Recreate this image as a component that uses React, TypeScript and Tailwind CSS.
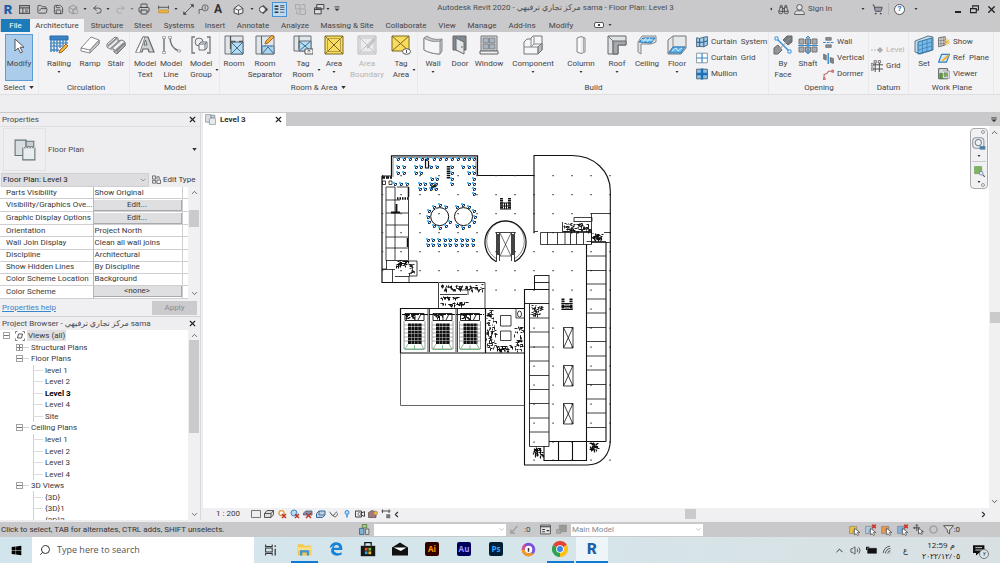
import React from "react";
import { FolderOpen, Save, Printer, Undo2, Redo2, ShoppingCart, ChevronDown, ChevronUp, ChevronLeft, ChevronRight, X, Search, Binoculars, Wifi, Volume2 } from "lucide-react";
import { FaWindows } from "react-icons/fa";

type Kids = { children?: React.ReactNode };

function Ico({ children, size = "size-5" }: Kids & { size?: string }) {
  return (
    <svg viewBox="0 0 20 20" className={`${size} shrink-0`} fill="none" stroke="#6b7178" strokeWidth="1" aria-hidden="true">
      {children}
    </svg>
  );
}

function Caret({ className = "" }: { className?: string }) {
  return (
    <svg viewBox="0 0 6 4" className={`h-[2px] w-[4px] shrink-0 ${className}`} aria-hidden="true">
      <path d="M0 0h6L3 4z" fill="#333" />
    </svg>
  );
}

/* ---------- ribbon icons ---------- */

const icons = {
  modify: <Ico><path d="M6 3v12l3-3 2.500 5 2-1-2.400-4.700H15z" fill="#fff" stroke="#555" /></Ico>,
  railing: (
    <Ico>
      <path d="M1 1h18v4H1z" fill="#3b82c4" stroke="#2a6aa8" />
      <path d="M1 8h18M1 11h14" stroke="#2a6aa8" />
      <path d="M2 5v12M5 5v12M8 5v12M11 5v8M14 5v5M17 5v4M1 15h9" stroke="#4a8ac4" strokeWidth="1.500" />
      <path d="M10 18l1-3 6-6 2 2-6 6z" fill="#f2b33c" stroke="#a06a1c" />
    </Ico>
  ),
  ramp: <Ico><path d="M1 13L11 2l8 3v4l-9 9-9-2z" fill="#fff" stroke="#888" /><path d="M1 13l9 2 9-10" stroke="#888" /><path d="M10 15l9-10v4l-9 9z" fill="#c3c7cb" stroke="#888" /></Ico>,
  stair: <Ico><path d="M1 9l8-7 3 1v3l4-1 3 2v4l-8 8-3-2v-3l-4 0-3-2z" fill="#eef0f1" stroke="#777" /><path d="M2 11l9-8M5 13.500l9-8M8 17l10-9" stroke="#8d9297" strokeWidth="1.800" /><path d="M11 18.500l8-7.500V8l-8 7.500z" fill="#aab0b5" stroke="#777" /></Ico>,
  mtext: <Ico><path d="M1 17L8 2h5l6 15h-5l-1-3H8l-1 3z" fill="#cfd3d6" stroke="#666" strokeWidth="1.200" /><path d="M9 10l1.500-5 1.500 5z" fill="#fff" stroke="#666" /><path d="M1 17L8 2h2L5 17" fill="#fff" stroke="#888" /></Ico>,
  mline: <Ico><path d="M3 2v15" strokeWidth="1.400" /><path d="M9 2c0 7 3 12 9 14" strokeWidth="1.400" /><path d="M1.500 1.500h3v2h-3zM1.500 16.500h3v2h-3zM7.500 1.500h3v2h-3zM16.500 15h3v2h-3z" fill="#fff" stroke="#888" strokeWidth=".7" /></Ico>,
  mgroup: <Ico><path d="M4 2H1v16h3M16 2h3v16h-3" stroke="#777" strokeWidth="1.300" /><circle cx="8" cy="7" r="4" fill="#e9ebed" /><path d="M8 9l2-2h6v6l-2 2H8z" fill="#f5f6f7" /><path d="M8 9h6v6M14 9l2-2" /></Ico>,
  room: <Ico><path d="M1 1h18v18H1z" fill="#e1e6ea" /><path d="M7 7h12v12H7z" fill="#b5dcf0" stroke="#4a6a80" /><path d="M7 7l12 12M19 7L7 19" stroke="#3d6d8e" /><path d="M6.500 1v13M6.500 6.500h5M15 6.500h4" stroke="#555" strokeWidth="1.300" /></Ico>,
  roomsep: <Ico><path d="M1 1h18v18H1z" fill="#e1e6ea" /><path d="M7 11h12v8H7z" fill="#a9d6f0" /><path d="M7 19l6-7 6 7M6.500 1v18" stroke="#3d6d8e" /><path d="M6 11h13" stroke="#3e93cf" strokeDasharray="2 1" /><path d="M10 9l1-3 6-6 2 2-6 6z" fill="#f2b33c" stroke="#a06a1c" /></Ico>,
  tagroom: <Ico><path d="M1 1h17v15H1z" fill="#e1e6ea" /><path d="M6 6h12v10H6z" fill="#b5dcf0" /><path d="M6 6l12 10M18 6L6 16" stroke="#3d6d8e" /><path d="M6 1v13" stroke="#555" /><path d="M12 14h8v5h-8z" fill="#fff" stroke="#555" /><path d="M15 17.500v-2h2v2" stroke="#555" strokeWidth=".7" /></Ico>,
  area: <Ico><path d="M1 1h18v18H1z" fill="#f9dc5c" stroke="#7a6a25" /><path d="M1 1l18 18M19 1L1 19" stroke="#766632" /><path d="M3.500 3.500h13v13h-13z" stroke="#b5a04a" /></Ico>,
  areab: <Ico><path d="M1 1h18v18H1z" fill="#ebebec" stroke="#bbb" /><path d="M1 1l18 18M19 1L1 19M3 3h14v14H3z" stroke="#c4c4c6" /><path d="M10 13l8-9" stroke="#c0c0c2" strokeWidth="2" /></Ico>,
  tagarea: <Ico><path d="M1 1h17v15H1z" fill="#f9dc5c" stroke="#7a6a25" /><path d="M1 1l17 15M18 1L1 16" stroke="#766632" /><ellipse cx="15.500" cy="16.500" rx="4" ry="2.800" fill="#fff" stroke="#555" /><path d="M15.500 15v3" stroke="#555" /></Ico>,
  wall: <Ico><path d="M1 3l3-2c4 3 8 4 15 3v12l-2 3c-7 0-12-2-16-4z" fill="#c5cacf" stroke="#888" /><path d="M1 3c5 3 9 4 16 3v13c-7 0-12-2-16-4z" fill="#f4f5f6" stroke="#888" /><path d="M17 6l2-2" stroke="#888" /></Ico>,
  door: <Ico><path d="M3 1h13v14H3z" fill="#7f8994" stroke="#666" /><path d="M6 3l8 4v12l-8-4z" fill="#e3e7ea" stroke="#666" /><circle cx="12" cy="12" r=".8" fill="#555" stroke="none" /></Ico>,
  window: <Ico><path d="M2 1h16v15H2z" fill="#d3d7da" stroke="#777" /><path d="M4 3h5.500v5H4zM10.500 3H16v5h-5.500zM4 9h5.500v5H4zM10.500 9H16v5h-5.500z" fill="#a7b3be" stroke="#777" strokeWidth=".7" /><path d="M1 16h18v3H1z" fill="#f0f1f2" stroke="#666" /></Ico>,
  component: <Ico><path d="M1 7l3-3h4V3l2-2h9v14l-4 4H1z" fill="#f6f7f8" stroke="#777" /><path d="M15 12l4-4v7l-4 4z" fill="#b8bdc2" /><path d="M8 4v8H1M8 12h7v7M8 12l3-3V2M11 9h8" stroke="#888" /></Ico>,
  column: <Ico><path d="M6 3q4-3 8 0v14q-4 3-8 0z" fill="#e9ebed" stroke="#888" /><path d="M8.500 3v14" stroke="#fff" strokeWidth="2" /><path d="M12.500 3v15" stroke="#aaa" /></Ico>,
  roof: <Ico><path d="M1 1h18v9h-8v9H1z" fill="#dfe2e4" stroke="#666" /><path d="M6 6h13v4h-8v9H6z" fill="#a2a8ae" stroke="#666" /><path d="M1 1l5 5M6 6v13" stroke="#777" /></Ico>,
  ceiling: <Ico><path d="M1 7l4-6h14v6l-5 2H4v10l-3-2z" fill="#dce2e7" stroke="#888" /><path d="M2 7l4-4h12l-4 5z" fill="#5ab0ea" stroke="#2d7db9" /><path d="M6 7l3-4M10 7l3-4M4 5h12" stroke="#d6edfb" /></Ico>,
  floor: <Ico><path d="M1 5l5-4h13v12l-5 6H1z" fill="#e6e9eb" stroke="#777" /><path d="M6 1v11h13M1 18l5-6" stroke="#888" /><path d="M2 18l4-6h12l-4 6z" fill="#5fb1ea" stroke="#2d7db9" /><path d="M5 16l4-3 2 3 4-3" stroke="#d6edfb" /></Ico>,
  csystem: <Ico size="size-[12px]"><path d="M1 3l5 1 7-2 6-1v14l-6 3-7-1-5 1z" fill="#a6cdea" stroke="#49677f" strokeWidth="1.600" /><path d="M6 4v14M13 2v16M1 10l5 1 7-1 6-2" stroke="#33678f" strokeWidth="1.800" /></Ico>,
  cgrid: <Ico size="size-[12px]"><path d="M1 2h18v16H1z" fill="#fff" stroke="#7d8e9b" strokeWidth="1.500" /><path d="M10 2v16M1 10h18" stroke="#2f8ad0" strokeWidth="2" /></Ico>,
  mullion: <Ico size="size-[12px]"><path d="M1 2h18v16H1z" fill="#93bfe0" stroke="#44617a" strokeWidth="1.500" /><path d="M10 1v18M1 10h18" stroke="#1d70b5" strokeWidth="4" /></Ico>,
  byface: <Ico><path d="M10 5l4-4h5v6l-4 3z" fill="#777d84" stroke="#666" /><path d="M1 13l4-3 4 5-4 4H1z" fill="#8f959b" stroke="#666" /><path d="M4 4l12 12" stroke="#3c95dc" strokeWidth="1.500" /><path d="M2 2h3v3H2zM15 15h3v3h-3z" fill="#fff" stroke="#3c95dc" /><path d="M17 3L3 18" stroke="#999" /></Ico>,
  shaft: <Ico><path d="M1 4h5v5H1zM14 4h5v5h-5zM1 12h5v5H1zM14 12h5v5h-5zM7.500 4h5v5h-5zM7.500 12h5v5h-5z" fill="#a5abb1" stroke="#777" /><path d="M10 1v18M8 3l2-2 2 2M8 17l2 2 2-2M0 10.500h20" stroke="#318dd6" /></Ico>,
  owall: <Ico size="size-[11px]"><path d="M5 1h10v5H5zM5 14h10v5H5z" fill="#888f96" stroke="#555" /><path d="M0 10h20" stroke="#2d89d3" strokeWidth="2" strokeDasharray="5 2" /></Ico>,
  overt: <Ico size="size-[11px]"><path d="M1 2l5 2v9l-5-2zM13 8l6 2v9l-6-2z" fill="#7d848b" stroke="#555" /><path d="M9.500 0v20" stroke="#2d89d3" strokeWidth="2.500" /></Ico>,
  odorm: <Ico size="size-[11px]"><path d="M2 18V10q6-1 8-6h8" stroke="#b96e6c" strokeWidth="2" /><path d="M0 16h4v4H0zM16 2h4v4h-4z" fill="#d99" stroke="#b44" /></Ico>,
  level: <Ico size="size-[12px]"><path d="M0 10h12" stroke="#aaa" strokeDasharray="3 2" strokeWidth="1.500" /><path d="M15 5l5 5-5 5-5-5z" fill="#aaa" stroke="none" /></Ico>,
  grid: <Ico size="size-[12px]"><path d="M7 4v16M14 4v16M4 8h16M4 15h16" stroke="#444" strokeWidth="1.500" /><path d="M5 1h4v4H5zM12 1h4v4h-4zM0 6h4v4H0zM0 13h4v4H0z" fill="#ddd" stroke="#444" /></Ico>,
  set: <Ico><path d="M1 6l13-5 5 1v13l-13 4-5-2z" fill="#c7d9e6" stroke="#5e7b91" /><path d="M4 7l14-4v12l-14 4z" fill="#79bae6" stroke="#2e74a8" /><path d="M8.500 5.500v12M13 4.500v12M4 11l14-4M4 15l14-4" stroke="#3b83b8" strokeWidth=".8" /></Ico>,
  show: <Ico size="size-[12px]"><path d="M1 3l11-2v14L1 18z" fill="#ddd" stroke="#666" strokeWidth="1.500" /><path d="M5 2v15M9 2v14M1 8l11-1M1 13l11-1" stroke="#666" /><path d="M15 4v12M9 10h11M11 6l8 8M19 6l-8 8" stroke="#f0b73e" strokeWidth="1.500" /></Ico>,
  ref: <Ico size="size-[12px]"><path d="M1 17L6 4h13l-5 13z" fill="#d7eaf7" stroke="#2d7fc0" strokeWidth="2" /><path d="M7 15L18 5" stroke="#efaf37" strokeWidth="3" /></Ico>,
  viewer: <Ico size="size-[12px]"><path d="M1 1h15v17H1z" fill="#d7dde0" stroke="#555" strokeWidth="1.500" /><path d="M3 9h8v8H3z" fill="#5a9c3e" stroke="#376b24" /><path d="M8 5h11v12H8" stroke="#777" fill="#eee" /><path d="M10 8h6v6h-6z" fill="#7ab55c" /></Ico>,
};

/* ---------- ribbon ---------- */

type ToolProps = { w: string; icon: React.ReactNode; l1: string; l2?: string; below?: boolean; side?: boolean; dim?: boolean };

function Tool({ w, icon, l1, l2, below, side, dim }: ToolProps) {
  return (
    <button type="button" className={`flex shrink-0 flex-col items-center pt-[3px] leading-[11px] ${w} ${dim ? "text-[#b5b5b7]" : ""}`}>
      {icon}
      <span className="mt-[3px] whitespace-nowrap">{l1}</span>
      {below && <Caret className="mt-[2px]" />}
      {l2 && (
        <span className="relative whitespace-nowrap">
          {l2}
          {side && <Caret className="absolute -right-[7px] top-0" />}
        </span>
      )}
    </button>
  );
}

function Small({ icon, label, dim }: { icon: React.ReactNode; label: string; dim?: boolean }) {
  return (
    <button type="button" className={`flex h-4 items-center gap-[3px] whitespace-pre ${dim ? "text-[#b5b5b7]" : ""}`}>
      {icon}
      {label}
    </button>
  );
}

function Group({ label, w, caret, children }: Kids & { label: string; w: string; caret?: boolean }) {
  return (
    <section className={`flex shrink-0 flex-col border-r border-[#e9e8ea] ${w}`}>
      <div className="flex flex-1">{children}</div>
      <div className="flex h-[13px] items-center justify-center gap-1">
        {label}
        {caret && <Caret className="!h-[3px] !w-[5px]" />}
      </div>
    </section>
  );
}

function Ribbon() {
  return (
    <div className="flex h-[63px] shrink-0 overflow-hidden border-b border-[#dedddf] bg-[#f3f2f4] text-[#454548]">
      <Group label="Select" w="w-[39px]" caret>
        <button type="button" className="ml-[5px] mt-[2px] flex h-[47px] w-[28px] flex-col items-center border border-[#5d9bd3] bg-[#abcdeb] pt-px leading-[11px]">
          {icons.modify}
          <span className="mt-[2px]">Modify</span>
        </button>
      </Group>
      <Group label="Circulation" w="w-[91px] pl-1">
        <Tool w="w-[32px]" icon={icons.railing} l1="Railing" below />
        <Tool w="w-[30px]" icon={icons.ramp} l1="Ramp" />
        <Tool w="w-[22px]" icon={icons.stair} l1="Stair" />
      </Group>
      <Group label="Model" w="w-[90px] pl-px">
        <Tool w="w-[28px]" icon={icons.mtext} l1="Model" l2="Text" />
        <Tool w="w-[24px]" icon={icons.mline} l1="Model" l2="Line" />
        <Tool w="w-[36px]" icon={icons.mgroup} l1="Model" l2="Group" side />
      </Group>
      <Group label="Room & Area" w="w-[198px]" caret>
        <Tool w="w-[28px]" icon={icons.room} l1="Room" />
        <Tool w="w-[34px]" icon={icons.roomsep} l1="Room" l2="Separator" />
        <Tool w="w-[42px]" icon={icons.tagroom} l1="Tag" l2="Room" side />
        <Tool w="w-[20px]" icon={icons.area} l1="Area" below />
        <Tool w="w-[46px]" icon={icons.areab} l1="Area" l2="Boundary" dim />
        <Tool w="w-[22px]" icon={icons.tagarea} l1="Tag" l2="Area" side />
      </Group>
      <Group label="Build" w="w-[351px] pl-px">
        <Tool w="w-[28px]" icon={icons.wall} l1="Wall" below />
        <Tool w="w-[26px]" icon={icons.door} l1="Door" />
        <Tool w="w-[32px]" icon={icons.window} l1="Window" />
        <Tool w="w-[56px]" icon={icons.component} l1="Component" below />
        <Tool w="w-[40px]" icon={icons.column} l1="Column" below />
        <Tool w="w-[32px]" icon={icons.roof} l1="Roof" below />
        <Tool w="w-[28px]" icon={icons.ceiling} l1="Ceiling" />
        <Tool w="w-[32px]" icon={icons.floor} l1="Floor" below />
        <div className="flex flex-col pl-[3px] pt-[2px]">
          <Small icon={icons.csystem} label="Curtain  System" />
          <Small icon={icons.cgrid} label="Curtain  Grid" />
          <Small icon={icons.mullion} label="Mullion" />
        </div>
      </Group>
      <Group label="Opening" w="w-[100px] pl-px">
        <Tool w="w-[26px]" icon={icons.byface} l1="By" l2="Face" />
        <Tool w="w-[24px]" icon={icons.shaft} l1="Shaft" />
        <div className="flex flex-col pl-[3px] pt-[2px]">
          <Small icon={icons.owall} label="Wall" />
          <Small icon={icons.overt} label="Vertical" />
          <Small icon={icons.odorm} label="Dormer" />
        </div>
      </Group>
      <Group label="Datum" w="w-[40px]">
        <div className="flex flex-col pl-[2px] pt-[10px]">
          <Small icon={icons.level} label="Level" dim />
          <Small icon={icons.grid} label="Grid" />
        </div>
      </Group>
      <Group label="Work Plane" w="w-[85px] pl-[2px]">
        <Tool w="w-[26px]" icon={icons.set} l1="Set" />
        <div className="flex flex-col pl-px pt-[2px]">
          <Small icon={icons.show} label="Show" />
          <Small icon={icons.ref} label="Ref  Plane" />
          <Small icon={icons.viewer} label="Viewer" />
        </div>
      </Group>
    </div>
  );
}

/* ---------- title bar and tabs ---------- */

function Cell({ w, children, label }: Kids & { w: string; label: string }) {
  return (
    <button type="button" aria-label={label} className={`flex h-4 shrink-0 items-center justify-center ${w}`}>
      {children}
    </button>
  );
}

const q = "size-[11px]";

function TitleBar() {
  return (
    <header className="flex h-[18px] shrink-0 items-center bg-[#c9c8ca] text-[#4c4c4f]">
      <div className="flex w-[345px] shrink-0 items-center">
        <Cell w="w-4" label="Revit"><span className="text-[13px] font-black leading-none text-[#1d5fa6]">R</span></Cell>
        <Cell w="w-4" label="Home"><Ico size={q}><path d="M1 3h18v14H1zM1 7h18M7 7v10" stroke="#555" strokeWidth="2" /><path d="M11 11h5M11 14h5" stroke="#555" strokeWidth="2" /></Ico></Cell>
        <Cell w="w-5" label="Open"><FolderOpen className={q} /></Cell>
        <Cell w="w-3" label="Save"><Save className={q} /></Cell>
        <Cell w="w-[18px]" label="Sync"><Ico size={q}><path d="M2 6l7-4 7 4v8l-7 4-7-4zM2 6l7 4 7-4M9 10v8" stroke="#8b8b8e" strokeWidth="1.500" /><circle cx="14" cy="14" r="4" fill="#c9c8ca" stroke="#999" strokeWidth="1.500" /></Ico></Cell>
        <Cell w="w-[6px]" label="Sync options"><Caret /></Cell>
        <Cell w="w-[18px]" label="Undo"><Undo2 className={q} /></Cell>
        <Cell w="w-1" label="Undo list"><Caret /></Cell>
        <Cell w="w-5" label="Redo"><Redo2 className={`${q} text-[#a5a5a8]`} /></Cell>
        <Cell w="w-1" label="Redo list"><Caret className="opacity-50" /></Cell>
        <Cell w="w-5" label="Print"><Printer className="size-[12px]" /></Cell>
        <Cell w="w-[18px]" label="Measure"><Ico size={q}><path d="M1 6h18M1 3v6M19 3v6" stroke="#444" strokeWidth="1.500" /><path d="M1 11h18v5H1z" fill="#f2b63d" stroke="#b57c1a" /></Ico></Cell>
        <Cell w="w-2" label="Measure list"><Caret /></Cell>
        <Cell w="w-4" label="Dimension"><Ico size={q}><path d="M3 17L17 3" stroke="#444" strokeWidth="1.500" /><path d="M1 14l5 5H1zM14 1h5v5z" fill="#444" stroke="#444" /></Ico></Cell>
        <Cell w="w-[14px]" label="Tag"><Ico size={q}><circle cx="13" cy="7" r="5.500" stroke="#555" strokeWidth="1.500" /><path d="M13 4v6M8 10H2v8" stroke="#555" strokeWidth="1.500" /></Ico></Cell>
        <Cell w="w-4" label="Text"><span className="text-[12px] font-bold leading-none text-[#333]">A</span></Cell>
        <Cell w="w-[24px]" label="3D view"><Ico size={q}><path d="M2 8l8-6 8 6v8l-8 3-8-3z" fill="#eee" stroke="#444" strokeWidth="1.800" /><path d="M2 8l8 3 8-3M10 11v8" stroke="#444" strokeWidth="1.500" /></Ico></Cell>
        <Cell w="w-[4px]" label="3D list"><Caret /></Cell>
        <Cell w="w-[18px]" label="Section"><Ico size={q}><path d="M9 2l9 8-9 8z" fill="#444" stroke="#444" /><circle cx="8" cy="10" r="5.500" fill="#eee" stroke="#444" strokeWidth="1.800" /></Ico></Cell>
        <button type="button" aria-label="Thin lines" className="flex h-[15px] w-[15px] shrink-0 items-center justify-center border border-[#4a90d0] bg-[#bddaf3]"><Ico size={q}><path d="M1 4h7M1 9h7M1 15h7" stroke="#333" strokeWidth="3" /><path d="M11 3h8M11 6h8M11 10h8M11 15h8" stroke="#333" strokeWidth="1.300" /></Ico></button>
        <Cell w="w-[26px]" label="Close inactive"><Ico size={q}><path d="M1 1h8v8H1zM9 9h10v10H9zM12 1h6v6M3 12v6h4" stroke="#a0a0a3" strokeWidth="1.500" /></Ico></Cell>
        <Cell w="w-3" label="Switch windows"><Ico size={q}><path d="M5 1h13v8H5zM1 7h12v11H1z" fill="#ddd" stroke="#444" strokeWidth="1.800" /><path d="M1 10h12" stroke="#444" strokeWidth="2" /></Ico></Cell>
        <Cell w="w-[6px]" label="Windows list"><Caret /></Cell>
        <Cell w="w-[12px]" label="Customize"><Ico size="size-[6px]"><path d="M2 3h16" stroke="#333" strokeWidth="3" /><path d="M2 9h16l-8 8z" fill="#333" /></Ico></Cell>
      </div>
      <h1 className="flex-1 whitespace-nowrap pb-[3px] text-center">
        Autodesk Revit 2020 - مركز تجاري ترفيهي sama - Floor Plan: Level 3
      </h1>
      <div className="flex w-[234px] shrink-0 items-center">
        <Cell w="w-[10px]" label="Collapse search"><Caret className="rotate-90" /></Cell>
        <Cell w="w-[14px]" label="Search"><Binoculars className={q} /></Cell>
        <Cell w="w-[18px]" label="Account"><Ico size={q}><circle cx="10" cy="6" r="5" fill="#e5e5e6" stroke="#444" strokeWidth="1.500" /><path d="M1 19c0-6 5-8 9-6 4-2 9 0 9 6z" fill="#e5e5e6" stroke="#444" strokeWidth="1.500" /></Ico></Cell>
        <button type="button" className="w-[52px] text-left">Sign In</button>
        <Cell w="w-[6px]" label="Account list"><Caret /></Cell>
        <Cell w="w-[22px]" label="Store"><ShoppingCart className="size-[11px] fill-[#9aa0b0]" /></Cell>
        <span className="h-3 w-px bg-[#b5b4b6]" />
        <button type="button" className="mx-[5px] flex size-[11px] items-center justify-center rounded-full border border-[#555] bg-white text-[8px] font-bold leading-none text-[#2573b8]">?</button>
        <Cell w="w-[12px]" label="Help list"><Caret /></Cell>
        <div className="ml-auto flex items-center gap-[5px] pr-[3px]">
          <Cell w="w-[10px]" label="Minimize"><span className="mt-[5px] h-[2px] w-[6px] bg-[#222]" /></Cell>
          <Cell w="w-[12px]" label="Restore"><Ico size="size-[9px]"><path d="M6 6V2h13v9h-4M1 8h13v9H1z" stroke="#222" strokeWidth="2.500" /></Ico></Cell>
          <Cell w="w-[12px]" label="Close"><X className="size-[11px] text-[#222]" strokeWidth={3} /></Cell>
        </div>
      </div>
    </header>
  );
}

const tabs: [string, string][] = [
  ["Architecture", "w-[54px] bg-[#f3f2f4]"], ["Structure", "w-[46px]"], ["Steel", "w-[26px]"], ["Systems", "w-[46px]"],
  ["Insert", "w-[26px]"], ["Annotate", "w-[50px]"], ["Analyze", "w-[34px]"], ["Massing & Site", "w-[70px]"],
  ["Collaborate", "w-[48px]"], ["View", "w-[34px]"], ["Manage", "w-[36px]"], ["Add-Ins", "w-[44px]"], ["Modify", "w-[34px]"],
];

function Tabs() {
  return (
    <nav className="flex h-[14px] shrink-0 items-stretch bg-[#c9c8ca] pl-px text-[#454548]">
      <button type="button" className="mt-px w-[29px] bg-[#1c7bb8] text-white">File</button>
      {tabs.map(([t, w]) => (
        <button type="button" key={t} className={`mt-px flex shrink-0 items-center justify-center whitespace-nowrap ${w}`}>{t}</button>
      ))}
      <button type="button" aria-label="Minimize ribbon" className="ml-4 flex items-center gap-1">
        <span className="flex h-[6px] w-[10px] items-center justify-center rounded-[2px] border border-[#555] bg-white"><span className="size-[2px] bg-[#444]" /></span>
        <Caret />
      </button>
    </nav>
  );
}

/* ---------- left palettes ---------- */

const props: [string, string, boolean][] = [
  ["Parts Visibility", "Show Original", false],
  ["Visibility/Graphics Ove...", "Edit...", true],
  ["Graphic Display Options", "Edit...", true],
  ["Orientation", "Project North", false],
  ["Wall Join Display", "Clean all wall joins", false],
  ["Discipline", "Architectural", false],
  ["Show Hidden Lines", "By Discipline", false],
  ["Color Scheme Location", "Background", false],
  ["Color Scheme", "<none>", true],
];

function PlanIcon({ size }: { size: string }) {
  return (
    <Ico size={size}>
      <path d="M1 1h10v14H1z" fill="#d9dfe0" stroke="#65747a" />
      <path d="M11 2h7v5h-7z" stroke="#65747a" fill="#c5cfd1" />
      <path d="M8 8h11v11H8z" fill="#e8eeee" stroke="#65747a" />
      <path d="M8 8h11" stroke="#fff" strokeDasharray="1 1.500" />
    </Ico>
  );
}

function PaletteHead({ children }: Kids) {
  return (
    <div className="flex h-[13px] shrink-0 items-center justify-between pl-[2px] pr-[3px] text-[#4a4a4d]">
      <h2 className="whitespace-nowrap">{children}</h2>
      <button type="button" aria-label="Close"><X className="size-[9px] text-[#222]" strokeWidth={3} /></button>
    </div>
  );
}

function Properties() {
  return (
    <section className="flex shrink-0 flex-col border-b border-[#d3d2d4]">
      <PaletteHead>Properties</PaletteHead>
      <button type="button" className="flex h-[46px] items-center border-t border-[#e0dfe1] pr-[3px] text-left text-[#4a4a4d]">
        <span className="ml-[3px] flex h-[43px] w-[43px] items-center justify-center border border-[#dfe3e6]"><PlanIcon size="size-[22px]" /></span>
        <span className="ml-[2px] flex-1">Floor Plan</span>
        <Caret className="!h-[3px] !w-[5px]" />
      </button>
      <div className="flex h-[15px] items-center">
        <div className="relative ml-px flex h-[14px] w-[148px] items-center border border-[#cfced0] bg-[#dddcde]">
          <select aria-label="Element type" className="h-full w-full appearance-none pl-px text-[#222]"><option>Floor Plan: Level 3</option></select>
          <ChevronDown className="pointer-events-none absolute right-px size-[8px] text-[#777]" />
        </div>
        <button type="button" className="flex flex-1 items-center gap-[2px] whitespace-nowrap pl-[3px]">
          <Ico size="size-[9px]"><path d="M1 2h7v7H1zM1 12h7v6H1zM11 11h8v8h-8zM11 8V4h5v5" stroke="#555" strokeWidth="1.800" /></Ico>
          Edit Type
        </button>
      </div>
      <div className="flex h-[112px] overflow-hidden bg-white">
        <table className="h-[112px] flex-1 table-fixed border-collapse">
          <colgroup><col className="w-[91px]" /><col className="w-[89px]" /><col /></colgroup>
          <tbody>
            {props.map(([k, v, b]) => (
              <tr key={k} className="border-b border-[#cfced0]">
                <td className="overflow-hidden whitespace-nowrap border-r border-[#b9b8ba] p-0 pl-[6px] leading-[10px]">{k}</td>
                <td className="whitespace-nowrap border-r border-[#cfced0] p-0 leading-[10px]">
                  {b ? (
                    <button type="button" className="block h-[11px] w-full border-b border-r border-[#a9a8aa] bg-[#dfdee0] leading-[10px]">{v}</button>
                  ) : (
                    <span className="pl-px">{v}</span>
                  )}
                </td>
                <td className="p-0" />
              </tr>
            ))}
          </tbody>
        </table>
        <Scroll thumb="mt-[13px] h-[17px]" />
      </div>
      <div className="flex h-[17px] items-center justify-between bg-[#f0eff1] pl-[2px] pr-[3px]">
        <a href="#help" className="text-[#3a84c8] underline">Properties help</a>
        <button type="button" className="h-[14px] w-[45px] bg-[#cbcacc] text-[#8c8c8f]">Apply</button>
      </div>
    </section>
  );
}

function Scroll({ thumb }: { thumb: string }) {
  return (
    <div className="flex w-[12px] shrink-0 flex-col items-center bg-[#f0eff1] py-px">
      <ChevronUp className="size-[9px] shrink-0 text-[#444]" />
      <div className={`w-[10px] bg-[#cac9cb] ${thumb}`} />
      <ChevronDown className="mt-auto size-[9px] shrink-0 text-[#444]" />
    </div>
  );
}

type Node = { t: string; d: number; s?: "+" | "-"; b?: boolean };
const tree: Node[] = [
  { t: "Views (all)", d: 0, s: "-" }, { t: "Structural Plans", d: 1, s: "+" }, { t: "Floor Plans", d: 1, s: "-" },
  { t: "level 1", d: 2 }, { t: "Level 2", d: 2 }, { t: "Level 3", d: 2, b: true }, { t: "Level 4", d: 2 }, { t: "Site", d: 2 },
  { t: "Ceiling Plans", d: 1, s: "-" }, { t: "level 1", d: 2 }, { t: "Level 2", d: 2 }, { t: "Level 3", d: 2 }, { t: "Level 4", d: 2 },
  { t: "3D Views", d: 1, s: "-" }, { t: "{3D}", d: 2 }, { t: "{3D}1", d: 2 }, { t: "{3D}2", d: 2 },
];
const indent = ["pl-[3px]", "pl-[16px]", "pl-[33px]"];

function Browser() {
  return (
    <section className="flex min-h-0 flex-1 flex-col">
      <PaletteHead>Project Browser - مركز تجاري ترفيهي sama</PaletteHead>
      <div className="flex min-h-0 flex-1 bg-white">
        <div className="min-w-0 flex-1 overflow-hidden">
          <ul className="grid h-[196px] auto-rows-fr">
            {tree.map((n, i) => (
              <li key={i} className={`flex min-h-0 items-center ${indent[n.d]}`}>
                {n.s && (
                  <span className="flex size-[7px] items-center justify-center border border-[#a3a2a4] bg-white">
                    <svg viewBox="0 0 5 5" className="size-[5px]" aria-hidden="true"><path d={n.s === "+" ? "M0 2.500h5M2.500 0v5" : "M0 2.500h5"} stroke="#777" strokeWidth="1" /></svg>
                  </span>
                )}
                {n.d === 0 && <Ico size="ml-[5px] mr-[2px] size-[10px]"><path d="M1 5V1h4M15 1h4v4M19 15v4h-4M5 19H1v-4" stroke="#555" strokeWidth="1.500" /><path d="M7 6h8l-2 8H5z" stroke="#444" strokeWidth="1.800" /></Ico>}
                {n.d === 1 && <span className="mr-[2px] h-px w-[6px] bg-[#d5d4d6]" />}
                {n.d === 2 && (
                  <span className="mr-[2px] flex h-full w-[10px] items-center border-l border-[#d0cfd1]"><span className="h-px w-full bg-[#dddcde]" /></span>
                )}
                <span className={`whitespace-nowrap leading-[11px] ${n.b ? "font-bold text-black" : ""} ${n.d === 0 ? "bg-[#dfdee0] px-px" : ""}`}>{n.t}</span>
              </li>
            ))}
          </ul>
        </div>
        <Scroll thumb="h-[93px]" />
      </div>
    </section>
  );
}

/* ---------- floor plan ---------- */

function clutter(x: number, y: number, w: number, h: number, n: number, seed: number) {
  let s = seed * 7919;
  const r = () => ((s = (s * 16807) % 2147483647) / 2147483647);
  let d = "";
  for (let i = 0; i < n; i++) {
    const px = Math.round(x + r() * (w - 3)) + 0.5;
    const py = Math.round(y + r() * (h - 3)) + 0.5;
    const k = r();
    const l = 1 + Math.round(r() * 2);
    d += k < 0.42 ? `M${px} ${py}h${l}` : k < 0.84 ? `M${px} ${py}v${l}` : `M${px} ${py}h2v2`;
  }
  return d;
}

const seats: [number, number][] = [];
[70, 88, 106, 122, 140, 157, 178, 195, 213, 231, 250, 268, 282, 297].forEach((x) => seats.push([x, 41]));
[70, 87, 122, 138, 168, 187, 231, 265, 283, 297].forEach((x) => seats.push([x, 65]));
[70, 87, 122, 138, 231, 283, 297].forEach((x) => seats.push([x, 83]));
[185, 231, 297, 170].forEach((x) => seats.push([x, 101]));
[60, 77, 95, 135, 150, 168, 183, 231, 283, 297].forEach((x) => seats.push([x, 118]));
[135, 150, 168, 183, 297].forEach((x) => seats.push([x, 133]));
seats.push([297, 148]);
for (let i = 0; i < 9; i++) seats.push([158 + i * 17, 284], [158 + i * 17, 301]);
const ring = (cx: number, skip: number[]) => {
  for (let i = 0; i < 12; i++) {
    if (skip.includes(i)) continue;
    const a = (i * Math.PI) / 6;
    seats.push([cx + 36 * Math.cos(a), 215 + 34 * Math.sin(a)]);
  }
};
ring(194, [0, 11]);
ring(265, [6, 5, 7]);

const dots: [number, number][] = [];
const gx = [382.5, 401, 420, 439, 458, 477, 496, 515, 534, 553, 572, 591, 610];
const gy = [175.5, 194.5, 213.5, 232.5, 251.5, 270.5, 290, 309, 328, 347, 366, 385, 404, 423, 442, 460];
gy.forEach((y) =>
  gx.forEach((x) => {
    if (y > 280 && x < 496) return;
    if (y > 300 && x < 530) return;
    dots.push([x, y]);
  })
);

const rowsR = [241.5, 256, 270.5, 284, 299, 313, 327.5, 341.5, 356, 370, 384.5, 399, 413, 427.5, 441.5];
const rowsL = [318, 332, 347, 361, 375.5, 389.5, 403.5, 418, 432, 446.5];

function Stairs({ x, y }: { x: number; y: number }) {
  return (
    <g>
      <path d={`M${x + 1.5} ${y}v11M${x + 9.5} ${y}v11`} strokeWidth="3" strokeDasharray="1.500 .6" />
      <path d={`M${x} ${y + 5}h11M${x} ${y + 8}h11M${x} ${y + 11}h11M${x + 4.500} ${y + 5}v6M${x + 6.500} ${y + 5}v6`} strokeWidth="1" />
    </g>
  );
}

function FloorPlan() {
  return (
    <svg viewBox="375 145 245 330" className="h-[330px] w-[245px] shrink-0" fill="none" stroke="#111" strokeWidth=".8" role="img" aria-label="Level 3 floor plan">
      <path d="M382 176V282.500H438M382 176H391.500V155.800H477.500V175.500H534" strokeWidth="1.200" />
      <path d="M393 177V157.500H476V175" strokeWidth=".5" />
      <path d="M382 177.500h10" strokeWidth="2.500" strokeDasharray="3 1" />
      <path d="M382.500 181h3v3.500h-3zM389 181h3v3.500h-3z" />
      <path d="M386 187H395V260.500M386 187V260.500H408.500V187H397M386 200H400M395 213H408.500M386 225H408.500M386 237H408.500M386 248H408.500M386 213h9" />
      <path d="M386.500 260V269H382M392.500 269.500V282M382 269.500H395M395 276.500H409V282M409 261h8v15h-8" />
      <path d={clutter(396, 260, 14, 9, 32, 11)} strokeWidth="1.100" />
      <path d={clutter(408, 261, 7, 16, 20, 19)} />
      <path d="M397 198.500h11" strokeWidth="2.500" strokeDasharray="1.500 1" />
      <path d="M391 212.500h9M396.500 204v8" strokeWidth="1.800" />
      <path d="M408.500 187v10M407.500 238v9" strokeWidth="1.500" />
      <path d="M425.500 159h3v9h-3z" strokeWidth="1.200" />
      <path d="M448.500 166v13" strokeWidth="3.500" strokeDasharray="1.500 .7" />
      <path d={clutter(430, 183, 10, 7, 18, 35)} />
      <circle cx="439.700" cy="216.600" r="9" strokeWidth="1" />
      <circle cx="463.500" cy="216.600" r="9" strokeWidth="1" />
      {seats.map(([x, y], i) => {
        const px = Math.round(375 + x / 3);
        const py = Math.round(145 + y / 3);
        return (
          <g key={i} stroke="none">
            <path d={`M${px - 2} ${py - 2}h2v2h-2z`} fill="#58bdf0" />
            <path d={`M${px - 1} ${py}h1v1h1v-2h1v2h-1v1h-2z`} fill="#1d3f7d" />
            <path d={`M${px} ${py - 1}h1v1h-1z`} fill="#1c2d55" />
            <path d={`M${px + 1} ${py + 1}h1v1h-1z`} fill="#dcc36a" />
          </g>
        );
      })}
      {dots.map(([x, y], i) => <path key={i} d={`M${x - 0.6} ${y - 0.6}h1.300v1.300h-1.300z`} fill="#333" stroke="none" />)}

      <path d="M496 261.500A20.500 21.500 0 1 1 515 261.500" strokeWidth="1.200" />
      <path d="M497 259A18.800 20 0 1 1 514 259" strokeWidth=".5" />
      <path d="M496.500 232.500h18M496.500 232.500V262M514.500 232.500V262M499.500 233V261M511.500 233V261" />
      <path d="M498 234v21M513 234v21" strokeWidth="2.200" stroke="#444" />
      <path d="M500 233l11 23M511 233l-11 23M500 256h11" strokeWidth=".6" />
      <Stairs x={500} y={198} />

      <path d="M534 232.500V155.500H572C594 155.500 610.300 171 610.300 191V440C610.300 455 601 465 587 465H524.500V289.500H549" strokeWidth="1.100" />
      <path d="M591.500 244V213.500H610M534 231.500h4M574 222v-4.500h18v4" />
      <path d={clutter(562, 223, 30, 11, 74, 41)} strokeWidth=".9" />
      <path d="M562.500 222v9M562 231.500h30M574 221.500h17" />
      <path d="M540.500 232.500H591.500V244.500H540.500zM547.500 232.500v12M557.500 232.500v12M565 232.500v12M570.500 232.500v12M576.500 232.500v12M583.500 232.500v12" />
      <path d={clutter(592, 233, 12, 10, 30, 57)} strokeWidth="1.200" />
      <path d="M591 242.500h19M604 232.500h6M592 237.500h10" />
      <path d="M586.500 244V441.500M606 242V441.500" strokeWidth="1.100" />
      <path d={rowsR.map((y) => `M586.500 ${y}H606`).join("")} />
      <path d="M529.500 318V446.500M549 275V446.500M534.500 289V275.500H549M534.500 282.500H549M524.500 303.500H549M529.500 303.500V318M534.500 276v13" strokeWidth=".9" />
      <path d={rowsL.map((y) => `M529.500 ${y}H549`).join("")} />
      <path d={clutter(530, 305, 13, 13, 34, 63)} strokeWidth=".9" />
      <Stairs x={561.5} y={298.500} />
      {[327.5, 365.5, 403.5].map((y) => <path key={y} d={`M563.500 ${y}h9.500v20.500h-9.500zM563.500 ${y}l9.500 20.500M573 ${y}l-9.500 20.500`} />)}
      <path d="M549 441.500H606M544 446V460.500H586.500V442M558.500 442v18.500M572.500 442v18.500" strokeWidth="1.100" />
      <path d={clutter(533, 447, 11, 11, 32, 71)} strokeWidth="1.200" />
      <path d={clutter(589, 442, 11, 11, 32, 83)} strokeWidth="1.200" />

      <path d="M438.500 308V282.500H485V308" />
      <path d={clutter(439, 284, 46, 8, 66, 91)} strokeWidth=".9" />
      <path d="M440 294.500h27M462 290h6v5" />
      <path d={clutter(440, 296, 20, 5, 22, 97)} strokeWidth="1" />
      <path d={clutter(440, 302, 28, 6, 34, 103)} strokeWidth="1" />
      <path d="M400.500 308.500H524M400.500 308V353H524.500M485.500 308V353" strokeWidth="1.200" />
      <path d="M400.500 353V405.500H524.500" stroke="#555" strokeWidth=".9" />
      <path d="M402 314.500H484" strokeWidth="1" strokeDasharray="8 1" />
      <path d="M428 309v43M429.500 309v43M456 309v43M457.500 309v43" />
      {[405, 433, 460.5].map((x) => (
        <g key={x}>
          <path d={`M${x} 313.500h19v7h-19zM${x + 10} 313.500v7M${x + 13} 320l3-6`} strokeWidth=".9" />
          <path d={clutter(x, 313, 10, 8, 16, Math.round(x))} strokeWidth="1" />
          <path d={`M${x - 1} 321v28h21v-28`} stroke="#888" />
          <path d={`M${x - 1} 325h21M${x - 1} 329h21M${x - 1} 333h21M${x - 1} 337h21M${x - 1} 341h21`} stroke="#777" strokeWidth=".6" />
          <path d={`M${x + 3} 325h14M${x + 3} 328.500h14M${x + 3} 332h14M${x + 3} 335.500h14M${x + 3} 339h14M${x + 3} 342.500h14`} strokeWidth="2.800" strokeDasharray="3 .4" />
          <path d={`M${x} 349.500h19M${x} 349l3-5M${x + 19} 349l-3-5M${x + 9.5} 345v4`} stroke="#4fae62" strokeWidth=".7" />
        </g>
      ))}
      <path d="M500.500 315.500h10.500v10.500h-10.500zM500.500 331h10.500v9.500h-10.500z" />
      <path d={clutter(486, 310, 12, 42, 74, 111)} strokeWidth=".9" />
      <path d={clutter(496, 345, 18, 8, 32, 117)} strokeWidth="1.100" />
      <path d={clutter(514, 325, 10, 28, 42, 127)} strokeWidth=".9" />
      <ellipse cx="519.500" cy="314" rx="2" ry="3" />
      <path d="M516 309v9h8" />
    </svg>
  );
}

function Arrow({ children, label }: Kids & { label: string }) {
  return <button type="button" aria-label={label} className="flex shrink-0 items-center justify-center text-[#333]">{children}</button>;
}

const viewIcons = [
  <path key="a" d="M1 3h18v14H1z" fill="#eee" stroke="#666" strokeWidth="1.800" />,
  <path key="b" d="M1 9l5-6h13v8l-5 6H1zM1 9h13v8M14 9l5-6" fill="#ddd" stroke="#444" strokeWidth="1.800" />,
  <g key="c"><circle cx="9" cy="8" r="5" fill="#fff" stroke="#e49a2c" strokeWidth="2.500" /><path d="M10 10l8 8M18 10l-8 8" stroke="#c0392b" strokeWidth="3" /></g>,
  <g key="d"><circle cx="8" cy="8" r="6" fill="#b9dcf5" stroke="#3a87c4" strokeWidth="2" /><path d="M10 10l8 8M18 10l-8 8" stroke="#c0392b" strokeWidth="3" /></g>,
  <g key="e"><path d="M1 8l5-4h12v8H1z" fill="#7a9bc0" stroke="#456" strokeWidth="1.500" /><path d="M6 8l10 10M16 8L6 18" stroke="#c0392b" strokeWidth="3" /></g>,
  <g key="f"><path d="M1 9l5-5h12v8l-5 5H1z" fill="#b9cfe6" stroke="#3a6a9c" strokeWidth="2" /><path d="M6 4v8h12" stroke="#456" strokeWidth="1.500" /></g>,
  <path key="g" d="M1 6c3 0 3 8 7 7s4-7 8-7M8 13c5 6 9 0 9-4" stroke="#555" strokeWidth="2" />,
  <g key="h"><circle cx="10" cy="7" r="4" fill="#b4dcf8" stroke="#3990d4" strokeWidth="2" /><path d="M10 11v6" stroke="#3990d4" strokeWidth="3" /></g>,
  <g key="i"><path d="M1 4h12v12H1zM13 8l6-3v10l-6-3" stroke="#444" strokeWidth="2" /><circle cx="9" cy="10" r="3" stroke="#555" strokeWidth="1.500" /></g>,
  <g key="j"><path d="M1 17V7l7-4 8 3v11z" fill="#a77" stroke="#555" strokeWidth="1.500" /><circle cx="15" cy="8" r="4" fill="#f2b63d" /></g>,
  <g key="k"><path d="M1 4h18M3 1v7M16 1v7" stroke="#444" strokeWidth="1.800" /><path d="M11 11h7v7h-7z" fill="#777" /></g>,
];

function Workspace() {
  return (
    <main className="flex min-w-0 flex-1 flex-col bg-white">
      <div className="flex h-[13px] shrink-0 items-stretch bg-[#c9c8ca]">
        <div className="flex w-[83px] items-center bg-white pl-[2px] pr-[3px]">
          <PlanIcon size="size-[11px]" />
          <span className="ml-[4px] flex-1 font-bold text-[#333]">Level 3</span>
          <button type="button" aria-label="Close view"><X className="size-[9px] text-[#222]" strokeWidth={3} /></button>
        </div>
        <button type="button" aria-label="View list" className="ml-auto mr-[3px] flex items-center"><Ico size="size-[6px]"><path d="M1 3h18" stroke="#333" strokeWidth="3" /><path d="M1 8h18l-9 9z" fill="#333" /></Ico></button>
      </div>
      <div className="relative flex min-h-0 flex-1">
        <div className="flex min-w-0 flex-1 overflow-hidden pl-[172px] pt-[19px]">
          <FloorPlan />
        </div>
        <aside className="absolute right-[12px] top-[2px] flex h-[61px] w-[18px] flex-col items-center gap-[4px] rounded-[4px] border border-[#aaa9ab] bg-[#f1f0f2] pt-[8px]">
          <Ico size="size-[14px]"><rect x="1" y="1" width="16" height="15" rx="5" stroke="#8b949c" strokeWidth="1.500" /><circle cx="9" cy="8" r="4.500" stroke="#6f808e" strokeWidth="1.500" /><path d="M11 13h8v5h-8z" fill="#4d7ea8" stroke="none" /></Ico>
          <Caret />
          <span className="h-px w-[14px] bg-[#c9c8ca]" />
          <Ico size="size-[11px]"><path d="M1 1h13v13H1z" fill="#7fb463" stroke="#5a9441" /><circle cx="13" cy="13" r="3.500" fill="#d6ebf7" stroke="#557" /><path d="M16 16l4 4" stroke="#557" strokeWidth="2" /></Ico>
          <Caret />
          <span className="absolute right-[2px] top-px size-[4px] rounded-full border border-[#999]" />
          <span className="absolute bottom-px right-[2px] size-[4px] rounded-full border border-[#999]" />
        </aside>
        <div className="flex w-[11px] shrink-0 flex-col items-center bg-[#f0eff1] py-[2px]">
          <ChevronUp className="size-[9px] shrink-0 text-[#333]" />
          <div className="mt-[175px] h-[11px] w-[10px] bg-[#cac9cb]" />
          <ChevronDown className="mt-auto size-[9px] shrink-0 text-[#333]" />
        </div>
      </div>
      <div className="flex h-[12px] shrink-0 items-center bg-[#f0eff1]">
        <span className="w-[46px] whitespace-pre pl-[13px]">1 : 200</span>
        <div className="flex items-center">
          {viewIcons.map((v, i) => (
            <button type="button" key={i} aria-label="View control" className="flex w-[13px] justify-center"><Ico size="size-[10px]">{v}</Ico></button>
          ))}
        </div>
        <Arrow label="Scroll left"><ChevronLeft className="size-[9px]" strokeWidth={3} /></Arrow>
        <div className="flex h-full flex-1 items-center justify-center"><span className="h-[10px] w-[11px] bg-[#cac9cb]" /></div>
        <Arrow label="Scroll right"><ChevronRight className="size-[9px]" strokeWidth={3} /></Arrow>
        <span className="w-[12px]" />
      </div>
    </main>
  );
}

/* ---------- status bar ---------- */

function Combo({ label, text }: { label: string; text: string }) {
  return (
    <div className="relative flex h-[12px] w-[132px] shrink-0 items-center bg-white">
      <select aria-label={label} className="h-full w-full appearance-none pl-px text-[#8a8a8d]"><option>{text}</option></select>
      <ChevronDown className="pointer-events-none absolute right-[1px] size-[7px] text-[#999]" />
    </div>
  );
}

function Cursor({ c, red }: { c: string; red?: boolean }) {
  return (
    <Ico size="size-[12px]">
      <path d="M1 4h12v6H7v6H1z" fill={c} stroke="#777" strokeWidth="1" />
      <path d="M9 7v11l3-2 2 3 2-1-2-4h4z" fill="#fff" stroke="#444" strokeWidth="1.200" />
      {red && <path d="M12 1l6 6M18 1l-6 6" stroke="#d0342c" strokeWidth="2.800" />}
    </Ico>
  );
}

function StatusBar() {
  return (
    <footer className="flex h-[15px] shrink-0 items-center bg-[#c9c8ca] text-[#333]">
      <p className="w-[359px] shrink-0 whitespace-nowrap pl-px">Click to select, TAB for alternates, CTRL adds, SHIFT unselects.</p>
      <Ico size="mr-[4px] size-[11px]"><path d="M1 8h8v11H1z" fill="#7fb7d9" stroke="#37617e" strokeWidth="1.500" /><path d="M6 1h8v6H6z" fill="#a8cf8a" stroke="#54793a" strokeWidth="1.500" /><path d="M12 9h6v10h-6z" fill="#ddd" stroke="#555" strokeWidth="1.500" /></Ico>
      <Combo label="Workset" text="" />
      <div className="flex w-[34px] items-center gap-[5px] pl-[4px]"><Ico size="size-[9px]"><path d="M2 18L17 2M2 10v8h9" stroke="#999" strokeWidth="2.500" /></Ico><span className="text-[#444]">:0</span></div>
      <Ico size="size-[11px]"><path d="M1 2h18v16H1z" fill="#e5e5e6" stroke="#444" strokeWidth="1.500" /><path d="M1 5h18M4 10h5M12 12h5M4 14h5" stroke="#333" strokeWidth="2" /></Ico>
      <Ico size="ml-[5px] mr-[4px] size-[11px]"><path d="M6 2h13v12H6z" fill="#999" stroke="#888" /><path d="M1 10h8v7H1z" fill="#aaa" stroke="#888" /></Ico>
      <Combo label="Design option" text="Main Model" />
      <div className="ml-auto flex items-center gap-[4px] pr-[40px]">
        <Cursor c="#ecc243" />
        <Cursor c="#a9cbe8" red />
        <Cursor c="#e89a4a" />
        <Cursor c="#7fb3e0" red />
        <Ico size="size-[11px]"><path d="M7 1v12M1 7h12M5 3l2-2 2 2M3 5L1 7l2 2" stroke="#333" strokeWidth="1.500" /><path d="M10 8v10l3-2 2 3 2-1-2-4h4z" fill="#fff" stroke="#333" strokeWidth="1.300" /></Ico>
        <Ico size="size-[11px]"><circle cx="10" cy="10" r="6.500" stroke="#a2a2a5" strokeWidth="2.800" /></Ico>
        <span className="flex items-center"><Ico size="size-[11px]"><path d="M1 3h18l-7 8v7l-4-3v-4z" fill="#ddd" stroke="#555" strokeWidth="1.800" /></Ico>:0</span>
      </div>
    </footer>
  );
}

/* ---------- taskbar ---------- */

function TaskApp({ children, label, on, active }: Kids & { label: string; on?: boolean; active?: boolean }) {
  return (
    <button type="button" aria-label={label} className={`flex w-8 shrink-0 flex-col items-center ${active ? "bg-[#eef5f8]" : ""}`}>
      <span className="flex flex-1 items-center">{children}</span>
      <span className={`h-[2px] ${active ? "w-8" : "w-[27px]"} ${on ? "bg-[#1079d3]" : ""}`} />
    </button>
  );
}

function Taskbar() {
  return (
    <div className="flex h-[26px] shrink-0 bg-linear-to-r from-[#d2e4ec] via-[#d5e6eb] to-[#d9e0e3] font-['Open_Sans',sans-serif] text-[#222]">
      <button type="button" aria-label="Start" className="flex w-8 shrink-0 items-center justify-center"><FaWindows className="size-[11px] text-black" /></button>
      <label className="flex w-[222px] shrink-0 items-center gap-[6px] bg-white pl-[7px]">
        <Search className="size-[12px] -scale-x-100 text-[#333]" strokeWidth={2} />
        <input aria-label="Search" placeholder="Type here to search" className="w-[150px] bg-transparent text-[9px] placeholder:text-[#555] focus:outline-none" />
      </label>
      <button type="button" aria-label="Task view" className="flex w-[34px] shrink-0 items-center justify-center">
        <Ico size="size-[12px]"><path d="M1 1v3h11V1M1 19v-3h11v3M1 6.500h11v7H1z" stroke="#333" strokeWidth="1.700" /><path d="M17 2v3M17 8v11" stroke="#333" strokeWidth="2" /></Ico>
      </button>
      <TaskApp label="File Explorer" on><Ico size="size-[15px]"><path d="M1 3h7l2 2h9v13H1z" fill="#f6c84c" stroke="none" /><path d="M1 7h18v4H1z" fill="#fbdf85" stroke="none" /><path d="M4 18v-7h12v7h-3v-4H7v4z" fill="#3d95d6" stroke="none" /></Ico></TaskApp>
      <TaskApp label="Edge"><Ico size="size-[14px]"><path d="M1 9C2 3 6 .5 10.500 .5c5.500 0 8.500 4 8.500 8.500v2.500H7c.3 3 3 4.500 6 4.500 2 0 3.500-.5 5-1.400V18c-2 1-4 1.500-6.500 1.500C6.500 19.500 3 16.500 3 12.500 3 9.500 4.500 7.500 7 6 4.500 6.500 2.300 7.500 1 9zm6-.8h7.500c0-2.700-1.500-4-3.700-4-2.100 0-3.500 1.500-3.800 4z" fill="#1683d8" stroke="none" /></Ico></TaskApp>
      <TaskApp label="Store"><Ico size="size-[16px]"><path d="M1 6h18v13H1z" fill="#161616" stroke="none" /><path d="M6 6V2h8v4" stroke="#161616" strokeWidth="1.600" /><path d="M6 8.500h3.500V12H6z" fill="#e8502b" stroke="none" /><path d="M10.500 8.500H14V12h-3.500z" fill="#7fba2f" stroke="none" /><path d="M6 13h3.500v3.500H6z" fill="#2ba3e4" stroke="none" /><path d="M10.500 13H14v3.500h-3.500z" fill="#f6b922" stroke="none" /></Ico></TaskApp>
      <TaskApp label="Mail"><Ico size="size-[16px]"><path d="M0 8l10-6 10 6v10H0z" fill="#111" stroke="none" /><path d="M2 8h16l-7 4.500-9-4.500z" fill="#fff" stroke="none" /></Ico></TaskApp>
      <TaskApp label="Illustrator"><span className="flex size-[14px] items-center justify-center rounded-[2px] bg-[#330000] text-[8px] font-bold leading-none text-[#ff9a00]">Ai</span></TaskApp>
      <TaskApp label="Audition"><span className="flex size-[14px] items-center justify-center rounded-[2px] bg-[#00005b] text-[8px] font-bold leading-none text-[#9999ff]">Au</span></TaskApp>
      <TaskApp label="Photoshop"><span className="flex size-[14px] items-center justify-center rounded-[2px] bg-[#001e36] text-[8px] font-bold leading-none text-[#31a8ff]">Ps</span></TaskApp>
      <TaskApp label="Browser"><Ico size="size-[15px]"><circle cx="10" cy="10" r="7" fill="#fff" stroke="#7b4fe0" strokeWidth="4" /><path d="M3 10a7 7 0 0 0 12 5" stroke="#f59b23" strokeWidth="4" /><path d="M3 10a7 7 0 0 1 3-5.700" stroke="#e0508a" strokeWidth="4" /><path d="M10 8v5" stroke="#333" strokeWidth="2" /></Ico></TaskApp>
      <TaskApp label="Chrome" on>
        <Ico size="size-[16px]">
          <g stroke="none"><path d="M10 10L1.300 5A10 10 0 0 1 18.700 5z" fill="#e24336" /><path d="M10 10L18.700 5A10 10 0 0 1 10 20z" fill="#fbc116" /><path d="M10 10V20A10 10 0 0 1 1.300 5z" fill="#2ea24f" /><circle cx="10" cy="10" r="4.800" fill="#fff" /><circle cx="10" cy="10" r="3.700" fill="#3f83ee" /></g>
        </Ico>
      </TaskApp>
      <TaskApp label="Revit" on active><span className="font-['Roboto',sans-serif] text-[15px] font-black leading-none text-[#1d5fa6]">R</span></TaskApp>
      <div className="ml-auto flex items-center gap-[5px] pr-[11px]">
        <ChevronUp className="size-[11px] text-[#222]" />
        <Volume2 className="size-[11px] text-[#222]" strokeWidth={1.5} />
        <Ico size="size-[11px]"><path d="M3 6h16v9H3z" fill="#111" stroke="#111" /><path d="M1 9V4h5" stroke="#111" strokeWidth="2" /></Ico>
        <Wifi className="size-[11px] -rotate-45 text-[#222]" strokeWidth={1.5} />
        <span className="mr-[3px] w-[14px] text-center text-[8px]">ع</span>
        <div className="w-[42px] text-center text-[8px] leading-[11px]">
          <div>12:59 م</div>
          <div className="whitespace-nowrap">٢٠٢٢/١٢/٠٥</div>
        </div>
        <span className="relative ml-[6px] flex w-[16px] items-center">
          <Ico size="size-[12px]"><path d="M0 2h19v13h-9l-5 4v-4H0z" fill="#111" stroke="none" /><path d="M4 6h11M4 10h11" stroke="#ddd" strokeWidth="1.500" /></Ico>
          <span className="absolute -bottom-[3px] right-0 flex size-[10px] items-center justify-center rounded-full border border-[#777] bg-[#dde4e7] text-[6px] leading-none">٢</span>
        </span>
      </div>
    </div>
  );
}

export default function App() {
  return (
    <div className="flex h-screen flex-col overflow-hidden bg-[#eeedef] font-['Roboto','DejaVu_Sans',sans-serif] text-[8px] text-[#38383b]">
      <TitleBar />
      <Tabs />
      <Ribbon />
      <div className="h-[18px] shrink-0 border-b border-[#c9c8ca]" />
      <div className="flex min-h-0 flex-1 pb-[2px]">
        <div className="mr-[2px] flex w-[201px] shrink-0 flex-col border-r border-[#dad9db]">
          <Properties />
          <Browser />
        </div>
        <Workspace />
      </div>
      <StatusBar />
      <Taskbar />
    </div>
  );
}
